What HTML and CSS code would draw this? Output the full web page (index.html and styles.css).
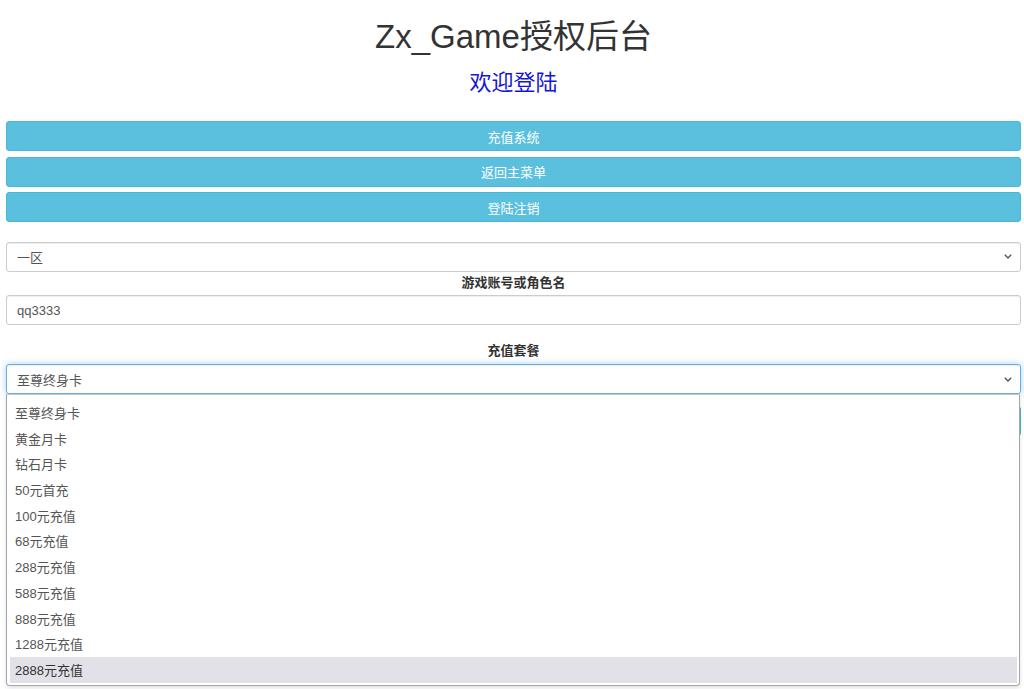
FILE: index.html
```html
<!DOCTYPE html>
<html lang="zh-CN">
<head>
<meta charset="utf-8">
<title>Zx_Game授权后台</title>
<link rel="stylesheet" href="styles.css">
</head>
<body>
<div class="wrap">
  <h1 class="title">Zx_Game授权后台</h1>
  <h3 class="subtitle">欢迎登陆</h3>

  <div class="btn-stack">
    <a class="btn">充值系统</a>
    <a class="btn">返回主菜单</a>
    <a class="btn">登陆注销</a>
  </div>

  <div class="select first">
    <span class="select-text">一区</span>
    <svg class="chev" width="8" height="5" viewBox="0 0 8 5"><path d="M0.8 0.8 L4 4 L7.2 0.8" fill="none" stroke="#555" stroke-width="1.4"/></svg>
  </div>
  <label class="lbl lbl-1">游戏账号或角色名</label>
  <input class="field" type="text" value="qq3333">
  <label class="lbl lbl-2">充值套餐</label>
  <div class="select-wrap">
    <div class="select focus">
      <span class="select-text">至尊终身卡</span>
      <svg class="chev" width="8" height="5" viewBox="0 0 8 5"><path d="M0.8 0.8 L4 4 L7.2 0.8" fill="none" stroke="#555" stroke-width="1.4"/></svg>
    </div>
    <ul class="dropdown">
      <li>至尊终身卡</li>
      <li>黄金月卡</li>
      <li>钻石月卡</li>
      <li>50元首充</li>
      <li>100元充值</li>
      <li>68元充值</li>
      <li>288元充值</li>
      <li>588元充值</li>
      <li>888元充值</li>
      <li>1288元充值</li>
      <li class="active">2888元充值</li>
    </ul>
  </div>
  <a class="btn submit">立即充值</a>
</div>
</body>
</html>
```
FILE: styles.css
```css
* { box-sizing: border-box; }
html, body {
  margin: 0;
  padding: 0;
  background: #fff;
}
body {
  min-height: 689px;
  font-family: "Liberation Sans", Arial, "Noto Sans CJK SC", sans-serif;
  font-size: 13px;
  color: #333;
}
.wrap {
  min-height: 689px;
  padding: 0 3px 0 6px;
  overflow: hidden;
}
.title {
  margin: 19px 0 0;
  font-size: 33px;
  font-weight: 400;
  line-height: 36px;
  text-align: center;
  color: #333;
}
.subtitle {
  margin: 16px 0 0;
  font-size: 22px;
  font-weight: 400;
  line-height: 24px;
  text-align: center;
  color: #1515d8;
}
.btn-stack {
  margin-top: 26px;
  display: flex;
  flex-direction: column;
  gap: 5.5px;
}
.btn {
  display: flex;
  align-items: center;
  justify-content: center;
  height: 30px;
  background: #5bc0de;
  border: 1px solid #46b8da;
  border-radius: 3px;
  color: #fff;
  font-size: 13px;
}
.select {
  position: relative;
  display: flex;
  align-items: center;
  height: 30px;
  padding: 0 10px;
  border: 1px solid #ccc;
  border-radius: 3px;
  background: #fff;
  color: #555;
  box-shadow: inset 0 1px 1px rgba(0,0,0,.075);
}
.select.first { margin-top: 19.5px; }
.select-text { flex: 1; }
.chev { flex: none; margin-right: -2px; }
.select.focus {
  border-color: #66afe9;
  box-shadow: inset 0 1px 1px rgba(0,0,0,.075), 0 0 6px rgba(102,175,233,.6);
}
.lbl {
  display: block;
  text-align: center;
  font-weight: 700;
  line-height: 18px;
  color: #333;
}
.lbl-1 { margin-top: 2px; }
.lbl-2 { margin-top: 16.5px; }
.field {
  display: block;
  width: 100%;
  height: 30px;
  margin-top: 3.5px;
  padding: 0 10px;
  border: 1px solid #ccc;
  border-radius: 3px;
  font-family: inherit;
  font-size: 13px;
  color: #555;
  box-shadow: inset 0 1px 1px rgba(0,0,0,.075);
  outline: none;
}
.select-wrap {
  position: relative;
  margin-top: 4.5px;
  z-index: 2;
}
.dropdown {
  position: absolute;
  top: 100%;
  left: 0;
  right: 1px;
  margin: 0;
  padding: 5px 2px 2px 3px;
  list-style: none;
  background: #fff;
  border: 1px solid #a6a6a6;
  border-top-color: #c8c8c8;
  border-radius: 0 0 4px 4px;
  box-shadow: 0 2px 4px rgba(0,0,0,.12);
}
.dropdown li {
  height: 25.7px;
  line-height: 25.7px;
  padding-left: 5px;
  padding-top: 1px;
  color: #555;
  font-size: 13px;
}
.dropdown li.active {
  background: #e1e1e7;
  color: #333;
}
.submit {
  margin-top: 12px;
}
```
